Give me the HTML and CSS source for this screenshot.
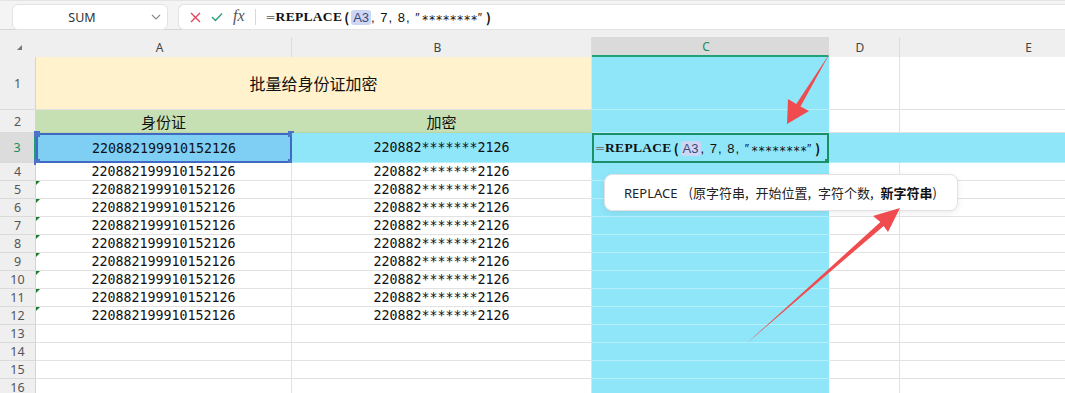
FILE: index.html
```html
<!DOCTYPE html>
<html lang="zh">
<head>
<meta charset="utf-8">
<title>批量给身份证加密</title>
<link rel="stylesheet" href="styles.css">
</head>
<body>
<div class="topbar">
  <div class="namebox">
    <span class="name">SUM</span>
    <span class="chev"><svg width="10" height="6" viewBox="0 0 10 6"><path d="M1 1 L5 5 L9 1" fill="none" stroke="#888" stroke-width="1.1"/></svg></span>
  </div>
  <div class="fbox">
    <span class="ico"><svg width="11" height="11" viewBox="0 0 11 11"><path d="M1 1 L10 10 M10 1 L1 10" stroke="#e0475b" stroke-width="1.4"/></svg></span>
    <span class="ico"><svg width="13" height="10" viewBox="0 0 13 10"><path d="M1 5 L4.8 8.8 L12 1.2" fill="none" stroke="#26a274" stroke-width="1.4"/></svg></span>
    <span class="fx">fx</span>
    <span class="fsep"></span>
    <span class="formula"><span class="eq">=</span><b class="fn">REPLACE</b><span class="par">(</span><span class="ref">A3</span><span class="args">, 7, 8, <span class="q">″</span><span class="stars">********</span><span class="q">″</span></span><span class="par">)</span></span>
  </div>
</div>

<div class="sheet">
  <div class="row hdr">
    <div class="corner"><span class="tri"></span></div>
    <div class="ch">A</div>
    <div class="ch">B</div>
    <div class="ch ch-sel">C</div>
    <div class="ch">D</div>
    <div class="ch">E</div>
  </div>

  <div class="row r1">
    <div class="rh">1</div>
    <div class="cell yellow span2 title">批量给身份证加密</div>
    <div class="cell cyan"></div>
    <div class="cell"></div>
    <div class="cell"></div>
  </div>

  <div class="row r2">
    <div class="rh">2</div>
    <div class="cell green head">身份证</div>
    <div class="cell green head">加密</div>
    <div class="cell cyan"></div>
    <div class="cell"></div>
    <div class="cell"></div>
  </div>

  <div class="row r3">
    <div class="rh rh-sel">3</div>
    <div class="cell selcell num">220882199910152126<span class="h h-tl"></span><span class="h h-tr"></span><span class="h h-bl"></span><span class="h h-br"></span></div>
    <div class="cell cyan num">220882*******2126</div>
    <div class="cell cyan edit"><span class="eq">=</span><b class="fn">REPLACE</b><span class="par">(</span><span class="ref">A3</span><span class="args">, 7, 8, <span class="q">″</span><span class="stars">********</span><span class="q">″</span></span><span class="par">)</span><span class="eh"></span></div>
    <div class="cell cyan"></div>
    <div class="cell cyan"></div>
  </div>

  <div class="row">
    <div class="rh">4</div>
    <div class="cell num">220882199910152126</div>
    <div class="cell num">220882*******2126</div>
    <div class="cell cyan"></div><div class="cell"></div><div class="cell"></div>
  </div>
  <div class="row">
    <div class="rh">5</div>
    <div class="cell num warn">220882199910152126</div>
    <div class="cell num">220882*******2126</div>
    <div class="cell cyan"></div><div class="cell"></div><div class="cell"></div>
  </div>
  <div class="row">
    <div class="rh">6</div>
    <div class="cell num warn">220882199910152126</div>
    <div class="cell num">220882*******2126</div>
    <div class="cell cyan"></div><div class="cell"></div><div class="cell"></div>
  </div>
  <div class="row">
    <div class="rh">7</div>
    <div class="cell num warn">220882199910152126</div>
    <div class="cell num">220882*******2126</div>
    <div class="cell cyan"></div><div class="cell"></div><div class="cell"></div>
  </div>
  <div class="row">
    <div class="rh">8</div>
    <div class="cell num warn">220882199910152126</div>
    <div class="cell num">220882*******2126</div>
    <div class="cell cyan"></div><div class="cell"></div><div class="cell"></div>
  </div>
  <div class="row">
    <div class="rh">9</div>
    <div class="cell num warn">220882199910152126</div>
    <div class="cell num">220882*******2126</div>
    <div class="cell cyan"></div><div class="cell"></div><div class="cell"></div>
  </div>
  <div class="row">
    <div class="rh">10</div>
    <div class="cell num warn">220882199910152126</div>
    <div class="cell num">220882*******2126</div>
    <div class="cell cyan"></div><div class="cell"></div><div class="cell"></div>
  </div>
  <div class="row">
    <div class="rh">11</div>
    <div class="cell num warn">220882199910152126</div>
    <div class="cell num">220882*******2126</div>
    <div class="cell cyan"></div><div class="cell"></div><div class="cell"></div>
  </div>
  <div class="row">
    <div class="rh">12</div>
    <div class="cell num warn">220882199910152126</div>
    <div class="cell num">220882*******2126</div>
    <div class="cell cyan"></div><div class="cell"></div><div class="cell"></div>
  </div>
  <div class="row">
    <div class="rh">13</div>
    <div class="cell"></div><div class="cell"></div>
    <div class="cell cyan"></div><div class="cell"></div><div class="cell"></div>
  </div>
  <div class="row">
    <div class="rh">14</div>
    <div class="cell"></div><div class="cell"></div>
    <div class="cell cyan"></div><div class="cell"></div><div class="cell"></div>
  </div>
  <div class="row">
    <div class="rh">15</div>
    <div class="cell"></div><div class="cell"></div>
    <div class="cell cyan"></div><div class="cell"></div><div class="cell"></div>
  </div>
  <div class="row">
    <div class="rh">16</div>
    <div class="cell"></div><div class="cell"></div>
    <div class="cell cyan"></div><div class="cell"></div><div class="cell"></div>
  </div>
</div>

<div class="tip">REPLACE<span class="tip-args">(原字符串, 开始位置, 字符个数, <b>新字符串</b>)</span></div>

<svg class="arrows" width="1065" height="393" viewBox="0 0 1065 393">
  <polygon fill="#f04b4f" points="830,53 796.3,103.9 788,99 787,124 809,111 800.5,106.5"/>
  <polygon fill="#f04b4f" points="747,343 880.4,222.1 873,216 900,208 888,232 883.7,225.9"/>
</svg>
</body>
</html>
```

FILE: styles.css
```css
body {
  margin: 0;
  width: 1065px;
  height: 393px;
  overflow: hidden;
  position: relative;
  background: #efefef;
  font-family: "Noto Sans", "Noto Sans CJK SC", sans-serif;
  color: #222;
}

/* ---------- formula bar ---------- */
.topbar {
  height: 30px;
  box-sizing: border-box;
  padding: 3px 0 0 12px;
  display: flex;
  align-items: flex-start;
  gap: 10px;
  background: #f4f4f4;
  border-bottom: 1px solid #d5d5d5;
  border-top: 1px solid #e4e4e4;
}
.namebox {
  width: 156px;
  height: 26px;
  box-sizing: border-box;
  background: #fff;
  border: 1px solid #e3e3e3;
  border-radius: 6px;
  display: flex;
  align-items: center;
}
.name {
  flex: 1;
  text-align: center;
  padding-left: 6px;
  font-size: 12.5px;
  color: #333;
}
.chev {
  width: 22px;
  display: flex;
  justify-content: center;
}
.fbox {
  flex: 1;
  height: 26px;
  box-sizing: border-box;
  background: #fff;
  border: 1px solid #e3e3e3;
  border-right: none;
  border-radius: 6px 0 0 6px;
  display: flex;
  align-items: center;
  padding-left: 10px;
}
.ico {
  width: 12px;
  margin-right: 10px;
  display: flex;
  justify-content: center;
}
.fx {
  font-family: "Liberation Serif", serif;
  font-style: italic;
  font-size: 16px;
  color: #555;
  margin: -2px 10px 0 0;
}
.fsep {
  width: 1px;
  height: 16px;
  background: #d8d8d8;
  margin-right: 8px;
}
.formula, .edit {
  font-size: 13px;
  color: #111;
  white-space: nowrap;
  display: flex;
  align-items: center;
}
.formula { margin-left: 2px; }
.eq {
  color: #777;
  font-family: "DejaVu Sans", sans-serif;
  font-size: 12px;
}
.fn {
  font-family: "Liberation Serif", serif;
  font-weight: bold;
  font-size: 13.5px;
  letter-spacing: 0.3px;
}
.par {
  font-family: "Noto Sans CJK SC", sans-serif;
  font-weight: bold;
  font-size: 13px;
  margin: 0 2px;
}
.ref {
  background: #cdd6f3;
  border-radius: 3px;
  padding: 0 2px;
  font-family: "Liberation Sans", sans-serif;
  font-size: 13px;
  color: #3b4a7a;
}
.args {
  font-family: "Liberation Sans", sans-serif;
  font-size: 13px;
  letter-spacing: 1px;
}
.q {
  font-size: 12px;
  margin-right: 1px;
}
.stars {
  font-family: "DejaVu Sans Mono", monospace;
  font-size: 12px;
  letter-spacing: -0.2px;
  position: relative;
  top: 2px;
}

/* ---------- sheet ---------- */
.sheet {
  padding-top: 7px;
}
.row {
  display: grid;
  grid-template-columns: 36px 256px 300px 237px 71px 266px;
  height: 18px;
}
.hdr { height: 20px; }
.r1 { height: 53px; }
.r2 { height: 23px; }
.r3 { height: 30px; }

.corner {
  position: relative;
  background: #efefef;
}
.tri {
  position: absolute;
  left: 17px;
  top: 8px;
  width: 0;
  height: 0;
  border-left: 5px solid transparent;
  border-bottom: 5px solid #777;
}
.ch {
  background: #efefef;
  border-right: 1px solid #dcdcdc;
  font-size: 12px;
  color: #444;
  display: flex;
  align-items: center;
  justify-content: center;
  padding-right: 8px;
}
.ch-sel {
  background: #dadada;
  color: #1e8c60;
  border-bottom: 2px solid #1ea27a;
  border-right-color: #dadada;
}

.rh {
  background: #efefef;
  border-bottom: 1px solid #dadada;
  border-right: 1px solid #d4d4d4;
  box-sizing: border-box;
  font-size: 12.5px;
  color: #555;
  display: flex;
  align-items: center;
  justify-content: center;
}
.rh-sel {
  background: #dcdcdc;
  color: #1e8c60;
  border-right: 2px solid #1d9e74;
}

.cell {
  position: relative;
  box-sizing: border-box;
  background: #fff;
  border-right: 1px solid #e2e2e2;
  border-bottom: 1px solid #e2e2e2;
  display: flex;
  align-items: center;
  justify-content: center;
  font-size: 13px;
  color: #111;
  white-space: nowrap;
}
.span2 { grid-column: span 2; }
.yellow { background: #fff2cc; }
.green { background: #c6e0b4; border-color: #c6e0b4; border-bottom-color: #b8d6a4; }
.cyan { background: #8fe6f9; border-bottom-color: #b6effc; border-right-color: #8fe6f9; }
.title { font-size: 16px; }
.head { font-size: 15px; }
.num {
  font-family: "DejaVu Sans Mono", monospace;
  font-size: 13.3px;
  letter-spacing: 0;
}

.selcell {
  background: #7ecff3;
  border: 2px solid #4169c2;
}
.h {
  position: absolute;
  width: 6px;
  height: 6px;
  background: #4a74c9;
}
.h-tl { left: -4px; top: -4px; }
.h-tr { right: -4px; top: -4px; }
.h-bl { left: -4px; bottom: -4px; }
.h-br { right: -4px; bottom: -4px; }

.edit {
  justify-content: flex-start;
  border: 2px solid #1b8f68;
  padding-left: 1px;
}
.eh {
  position: absolute;
  right: -3px;
  bottom: -3px;
  width: 5px;
  height: 5px;
  background: #1b8f68;
}

.warn::before {
  content: "";
  position: absolute;
  left: 0;
  top: 0;
  border-top: 4px solid #1a7d2c;
  border-right: 4px solid transparent;
}

/* ---------- overlays ---------- */
.tip {
  position: absolute;
  left: 604px;
  top: 174px;
  width: 354px;
  height: 37px;
  box-sizing: border-box;
  background: #fff;
  border: 1px solid #e2e2e2;
  border-radius: 8px;
  box-shadow: 0 2px 6px rgba(0, 0, 0, 0.08);
  display: flex;
  align-items: center;
  padding-left: 19px;
  font-size: 13px;
  color: #222;
  white-space: nowrap;
}
.tip-args {
  margin-left: 11px;
  font-family: "Noto Sans CJK SC", sans-serif;
  word-spacing: 4px;
}
.tip-args b { font-weight: bold; color: #111; }

.arrows {
  position: absolute;
  left: 0;
  top: 0;
  pointer-events: none;
}
```
